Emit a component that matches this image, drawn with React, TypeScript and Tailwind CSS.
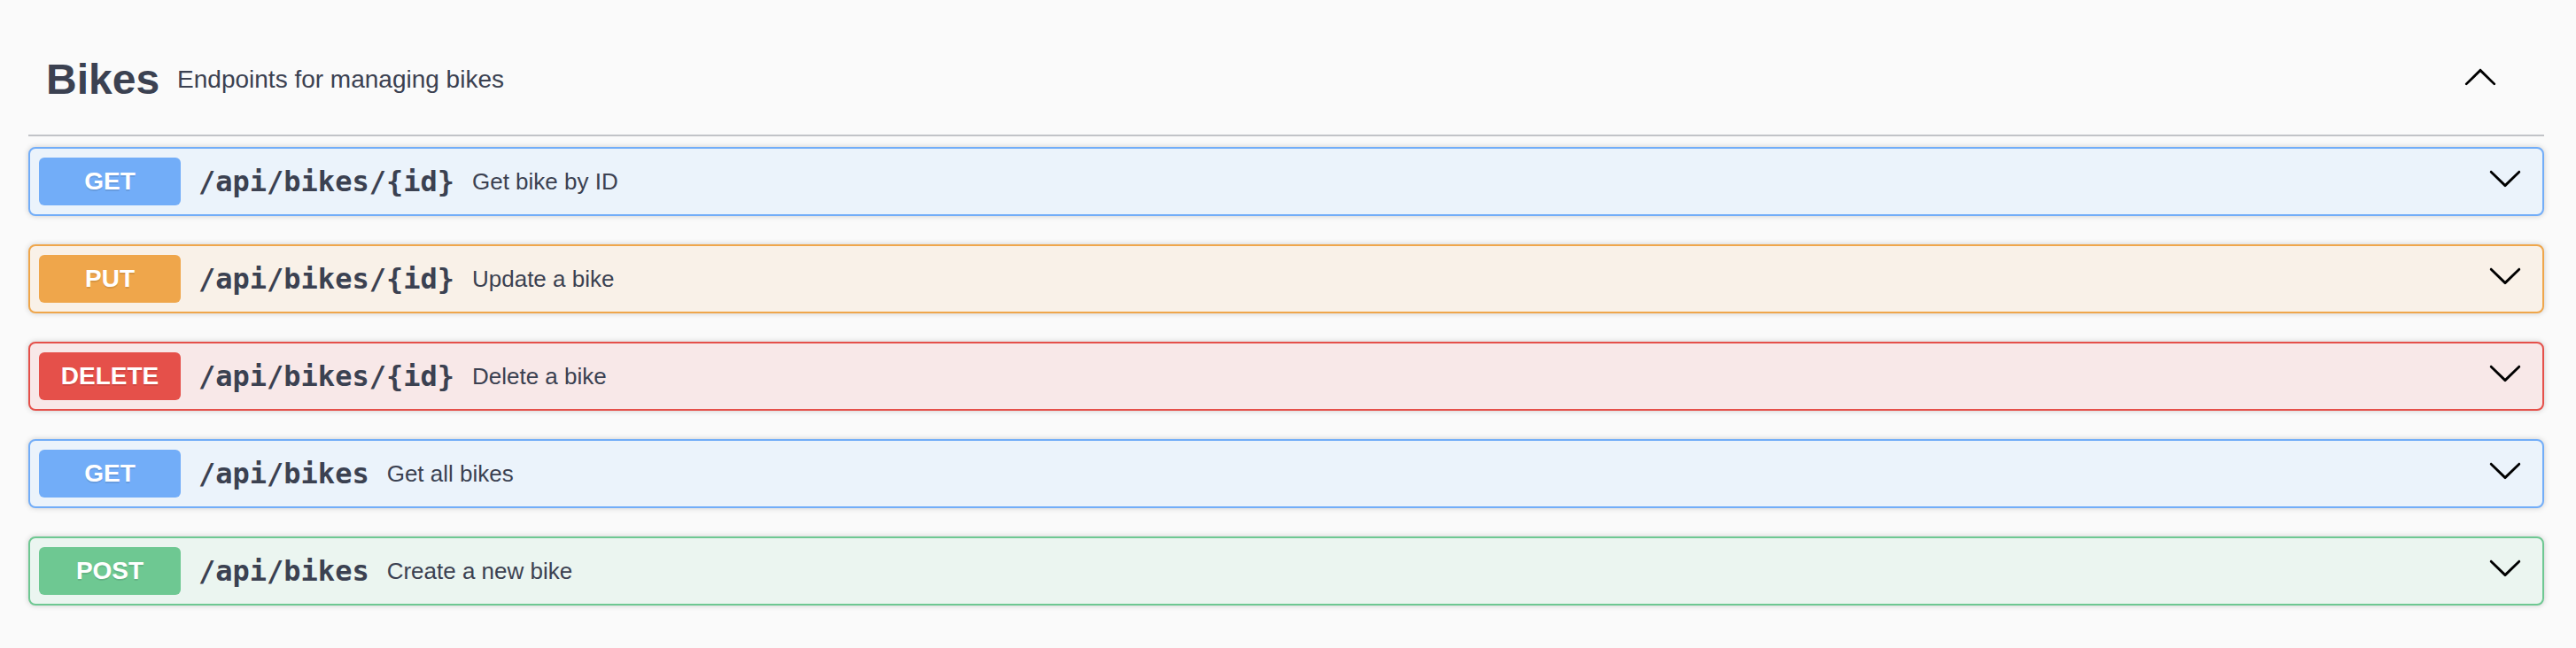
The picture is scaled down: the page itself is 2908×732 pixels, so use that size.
const OPERATIONS = [
  {
    method: 'GET',
    path: '/api/bikes/{id}',
    summary: 'Get bike by ID',
    badge: 'bg-[#72adf8]',
    block: 'border-[#72adf8] bg-[#ebf3fb]',
  },
  {
    method: 'PUT',
    path: '/api/bikes/{id}',
    summary: 'Update a bike',
    badge: 'bg-[#efa64b]',
    block: 'border-[#efa64b] bg-[#f9f1e8]',
  },
  {
    method: 'DELETE',
    path: '/api/bikes/{id}',
    summary: 'Delete a bike',
    badge: 'bg-[#e5504a]',
    block: 'border-[#e5504a] bg-[#f8e8e8]',
  },
  {
    method: 'GET',
    path: '/api/bikes',
    summary: 'Get all bikes',
    badge: 'bg-[#72adf8]',
    block: 'border-[#72adf8] bg-[#ebf3fb]',
  },
  {
    method: 'POST',
    path: '/api/bikes',
    summary: 'Create a new bike',
    badge: 'bg-[#6ec892]',
    block: 'border-[#6ec892] bg-[#ebf5f0]',
  },
];

function ArrowDown({ className = '' }: { className?: string }) {
  return (
    <svg viewBox="0 0 20 20" className={className} aria-hidden>
      <path
        fill="#000"
        d="M17.418 6.109c.272-.268.709-.268.979 0s.271.701 0 .969l-7.908 7.83c-.27.268-.707.268-.979 0l-7.908-7.83c-.27-.268-.27-.701 0-.969.271-.268.709-.268.979 0L10 13.25l7.418-7.141z"
      />
    </svg>
  );
}

function ArrowUp({ className = '' }: { className?: string }) {
  return (
    <svg viewBox="0 0 20 20" className={className} aria-hidden>
      <path
        fill="#000"
        d="M17.418 14.908c.272.268.709.268.979 0s.271-.701 0-.969l-7.908-7.83c-.27-.268-.707-.268-.979 0l-7.908 7.83c-.27.268-.27.701 0 .969.271.268.709.268.979 0L10 7.767l7.418 7.141z"
      />
    </svg>
  );
}

export default function App() {
  return (
    <div className="min-h-screen bg-[#fafafa] pl-[32px] pr-[36px] pt-[21px] font-['Liberation_Sans',Arial,sans-serif] text-[#3b4151]">
      {/* Tag header */}
      <div className="flex h-[133px] items-center border-b-2 border-[#c1c3c7] pb-[20px] pl-[20px] pr-[52px] pt-[26px]">
        <h3 className="flex flex-1 items-center">
          <span className="text-[48px] font-bold">Bikes</span>
          <small className="px-[20px] text-[28px]">Endpoints for managing bikes</small>
        </h3>
        <ArrowUp className="mb-[7px] h-[40px] w-[40px] shrink-0" />
      </div>

      {/* Operations */}
      <div className="mt-[12px] flex flex-col gap-[32px]">
        {OPERATIONS.map((op, i) => (
          <div
            key={i}
            className={[
              'flex h-[78px] items-center rounded-[8px] border-2 p-[10px] shadow-[0_0_6px_rgba(0,0,0,0.19)]',
              op.block,
            ].join(' ')}
          >
            <span
              className={[
                'flex h-[54px] w-[160px] shrink-0 items-center justify-center rounded-[6px] text-[28px] font-bold text-white [text-shadow:0_2px_0_rgba(0,0,0,0.1)]',
                op.badge,
              ].join(' ')}
            >
              {op.method}
            </span>
            <span className="px-[20px] font-['DejaVu_Sans_Mono',monospace] text-[32px] font-semibold">
              {op.path}
            </span>
            <span className="flex-1 text-[26px]">{op.summary}</span>
            <ArrowDown className="mb-[9px] mr-[12px] h-[40px] w-[40px] shrink-0" />
          </div>
        ))}
      </div>
    </div>
  );
}
